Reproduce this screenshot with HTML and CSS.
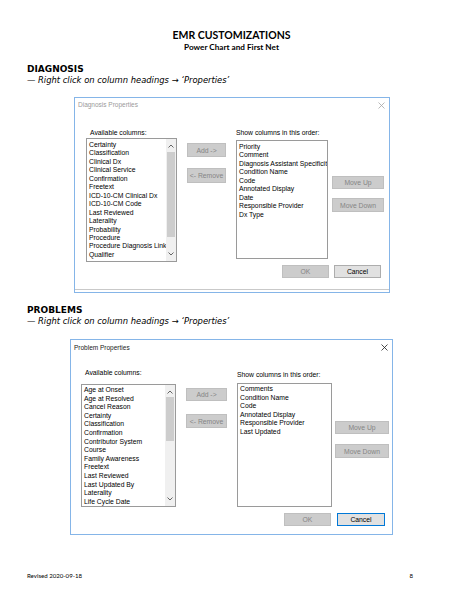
FILE: index.html
```html
<!DOCTYPE html>
<html>
<head>
<meta charset="utf-8">
<title>EMR Customizations</title>
<link rel="stylesheet" href="styles.css">
</head>
<body>
<div class="page">
  <header class="doc-head">
    <div class="doc-title">EMR CUSTOMIZATIONS</div>
    <div class="doc-sub">Power Chart and First Net</div>
  </header>

  <section class="sec sec-diag">
    <h2 class="sec-h">DIAGNOSIS</h2>
    <p class="sec-note">— Right click on column headings → ‘Properties’</p>

    <div class="dialog d1">
      <div class="titlebar">
        <span class="title">Diagnosis Properties</span>
        <svg class="close" viewBox="0 0 7 7" width="7" height="7"><path d="M0.5 0.5 L6.5 6.5 M6.5 0.5 L0.5 6.5"/></svg>
      </div>
      <div class="dbody">
        <div class="col col-avail">
          <div class="label">Available columns:</div>
          <div class="list avail">
            <div class="items">
              <div>Certainty</div><div>Classification</div><div>Clinical Dx</div><div>Clinical Service</div><div>Confirmation</div><div>Freetext</div><div>ICD-10-CM Clinical Dx</div><div>ICD-10-CM Code</div><div>Last Reviewed</div><div>Laterality</div><div>Probability</div><div>Procedure</div><div>Procedure Diagnosis Link</div><div>Qualifier</div>
            </div>
            <div class="scroll">
              <svg class="arr" viewBox="0 0 6 4" width="6" height="4"><path d="M0.5 3.5 L3 1 L5.5 3.5"/></svg>
              <div class="track"><div class="thumb"></div></div>
              <svg class="arr" viewBox="0 0 6 4" width="6" height="4"><path d="M0.5 0.5 L3 3 L5.5 0.5"/></svg>
            </div>
          </div>
        </div>
        <div class="mid">
          <div class="btn dis b-add">Add -&gt;</div>
          <div class="btn dis b-rem">&lt;- Remove</div>
        </div>
        <div class="col col-show">
          <div class="label">Show columns in this order:</div>
          <div class="list show">
            <div class="items">
              <div>Priority</div><div>Comment</div><div>Diagnosis Assistant Specificity</div><div>Condition Name</div><div>Code</div><div>Annotated Display</div><div>Date</div><div>Responsible Provider</div><div>Dx Type</div>
            </div>
          </div>
        </div>
        <div class="move">
          <div class="btn dis b-up">Move Up</div>
          <div class="btn dis b-down">Move Down</div>
        </div>
      </div>
      <div class="dfoot">
        <div class="btn dis b-ok">OK</div>
        <div class="btn b-cancel">Cancel</div>
      </div>
    </div>
  </section>

  <section class="sec sec-prob">
    <h2 class="sec-h">PROBLEMS</h2>
    <p class="sec-note">— Right click on column headings → ‘Properties’</p>

    <div class="dialog d2">
      <div class="titlebar">
        <span class="title">Problem Properties</span>
        <svg class="close" viewBox="0 0 7 7" width="7" height="7"><path d="M0.5 0.5 L6.5 6.5 M6.5 0.5 L0.5 6.5"/></svg>
      </div>
      <div class="dbody">
        <div class="col col-avail">
          <div class="label">Available columns:</div>
          <div class="list avail">
            <div class="items">
              <div>Age at Onset</div><div>Age at Resolved</div><div>Cancel Reason</div><div>Certainty</div><div>Classification</div><div>Confirmation</div><div>Contributor System</div><div>Course</div><div>Family Awareness</div><div>Freetext</div><div>Last Reviewed</div><div>Last Updated By</div><div>Laterality</div><div>Life Cycle Date</div>
            </div>
            <div class="scroll">
              <svg class="arr" viewBox="0 0 6 4" width="6" height="4"><path d="M0.5 3.5 L3 1 L5.5 3.5"/></svg>
              <div class="track"><div class="thumb"></div></div>
              <svg class="arr" viewBox="0 0 6 4" width="6" height="4"><path d="M0.5 0.5 L3 3 L5.5 0.5"/></svg>
            </div>
          </div>
        </div>
        <div class="mid">
          <div class="btn dis b-add">Add -&gt;</div>
          <div class="btn dis b-rem">&lt;- Remove</div>
        </div>
        <div class="col col-show">
          <div class="label">Show columns in this order:</div>
          <div class="list show">
            <div class="items">
              <div>Comments</div><div>Condition Name</div><div>Code</div><div>Annotated Display</div><div>Responsible Provider</div><div>Last Updated</div>
            </div>
          </div>
        </div>
        <div class="move">
          <div class="btn dis b-up">Move Up</div>
          <div class="btn dis b-down">Move Down</div>
        </div>
      </div>
      <div class="dfoot">
        <div class="btn dis b-ok">OK</div>
        <div class="btn b-cancel focus">Cancel</div>
      </div>
    </div>
  </section>

  <footer class="doc-foot">
    <span>Revised 2020-09-18</span>
    <span>8</span>
  </footer>
</div>
</body>
</html>
```

FILE: styles.css
```css
* { box-sizing: border-box; }
html, body { margin: 0; padding: 0; background: #fff; }
body { width: 463px; height: 599px; overflow: hidden; color: #000; }

.page {
  position: relative;
  width: 463px;
  height: 599px;
  padding: 0 0 0 27px;
}

/* header */
.doc-head {
  padding-top: 29px;
  text-align: center;
  font-family: Lato, "Liberation Sans", sans-serif;
  font-weight: 700;
  margin-left: -27px;
}
.doc-title { font-size: 10.5px; line-height: 12px; }
.doc-sub { font-size: 8.2px; line-height: 9px; margin-top: 2px; }

/* sections */
.sec-h {
  margin: 0;
  font-family: "DejaVu Sans", Verdana, sans-serif;
  font-weight: 700;
  font-size: 9px;
  line-height: 10px;
}
.sec-note {
  margin: 2px 0 0 0;
  font-family: "DejaVu Sans", Verdana, sans-serif;
  font-style: italic;
  font-size: 8.4px;
  line-height: 9px;
}
.sec-diag { margin-top: 12px; }
.sec-diag .sec-note { margin-bottom: 12px; }
.sec-prob { margin-top: 12px; }
.sec-prob .sec-note { margin-bottom: 13px; }

/* dialog */
.dialog {
  border: 1px solid #85b5e8;
  background: #fff;
  height: 196px;
  font-family: "Liberation Sans", Arial, sans-serif;
  font-size: 6.8px;
  color: #000;
}
.d1 {
  margin-left: 47px;
  width: 316px;
  box-shadow: inset 0 -2px 0 #fff, inset 0 -3px 0 #c9c9c9;
}
.d2 {
  margin-left: 43px;
  width: 323px;
}

.titlebar {
  display: flex;
  justify-content: space-between;
  align-items: center;
  padding: 0 4px 0 3px;
  font-size: 6.5px;
}
.d1 .titlebar { height: 12px; color: #9a9a9a; }
.d2 .titlebar { height: 15px; color: #1a1a1a; }
.close { fill: none; stroke-width: 0.8; }
.d1 .close { stroke: #a6a6a6; margin-top: 2px; }
.d2 .close { stroke: #222; }

.dbody {
  display: flex;
  align-items: flex-start;
}
.d1 .dbody { padding: 19px 0 0 11px; height: 152px; }
.d2 .dbody { padding: 14px 0 0 10px; height: 158px; }

.col { display: flex; flex-direction: column; }
.label { line-height: 8px; white-space: nowrap; }
.d1 .col-avail .label { padding-left: 4px; margin-bottom: 1px; }
.d1 .col-show .label { margin-top: 0; margin-bottom: 3px; }
.d2 .col-avail .label { padding-left: 4px; margin-bottom: 7px; }
.d2 .col-show .label { margin-top: 2px; margin-bottom: 4px; }

.list {
  border: 1px solid #9a9a9a;
  background: #fff;
  display: flex;
  overflow: hidden;
}
.items {
  flex: 1;
  overflow: hidden;
  white-space: nowrap;
  padding-left: 2px;
}
.d1 .items { line-height: 8.45px; padding-top: 2px; }
.d2 .items { line-height: 8.6px; padding-top: 1px; }

.d1 .avail { width: 91px; height: 124px; }
.d1 .show { width: 92px; height: 119px; }
.d2 .avail { width: 95px; height: 123px; }
.d2 .show { width: 95px; height: 124px; }

.scroll {
  width: 10px;
  flex: none;
  background: #f0f0f0;
  display: flex;
  flex-direction: column;
  align-items: center;
}
.arr { fill: none; stroke: #555; stroke-width: 0.9; flex: none; }
.arr:first-child { margin-top: 5px; }
.arr:last-child { margin-bottom: 5px; }
.track { flex: 1; width: 100%; padding: 0 1px; }
.thumb { background: #cdcdcd; width: 100%; }
.d1 .track { padding-top: 4px; }
.d1 .thumb { height: 85px; }
.d2 .track { padding-top: 3px; }
.d2 .thumb { height: 44px; }

/* buttons */
.btn {
  display: flex;
  align-items: center;
  justify-content: center;
  white-space: nowrap;
  border: 1px solid #adadad;
  background: #e1e1e1;
  color: #000;
  font-size: 6.8px;
}
.btn.dis {
  background: #cccccc;
  border-color: #bfbfbf;
  color: #858585;
}
.btn.focus { border-color: #0078d7; }

.mid { display: flex; flex-direction: column; }
.d1 .mid { margin: 14px 0 0 10px; width: 39px; }
.d1 .b-add { height: 14px; }
.d1 .b-rem { height: 15px; margin-top: 11px; }
.d2 .mid { margin: 19px 0 0 10px; width: 41px; }
.d2 .b-add { height: 13px; }
.d2 .b-rem { height: 14px; margin-top: 13px; }

.col-show { margin-left: 10px; }

.move { display: flex; flex-direction: column; }
.d1 .move { margin: 47px 0 0 4px; width: 52px; }
.d1 .b-up { height: 13px; }
.d1 .b-down { height: 14px; margin-top: 9px; }
.d2 .move { margin: 52px 0 0 3px; width: 54px; }
.d2 .b-up { height: 13px; }
.d2 .b-down { height: 14px; margin-top: 10px; }

.dfoot {
  display: flex;
  justify-content: flex-end;
  gap: 5px;
}
.d1 .dfoot { padding-right: 8px; margin-top: 3px; }
.d2 .dfoot { padding-right: 7px; margin-top: 0; gap: 6px; }
.dfoot .btn { width: 47px; height: 13px; }
.d2 .b-cancel { width: 48px; }

/* footer */
.doc-foot {
  position: absolute;
  left: 27px;
  top: 571px;
  width: 386px;
  display: flex;
  justify-content: space-between;
  font-family: Lato, "Liberation Sans", sans-serif;
  font-size: 6.1px;
  line-height: 9px;
}
```
